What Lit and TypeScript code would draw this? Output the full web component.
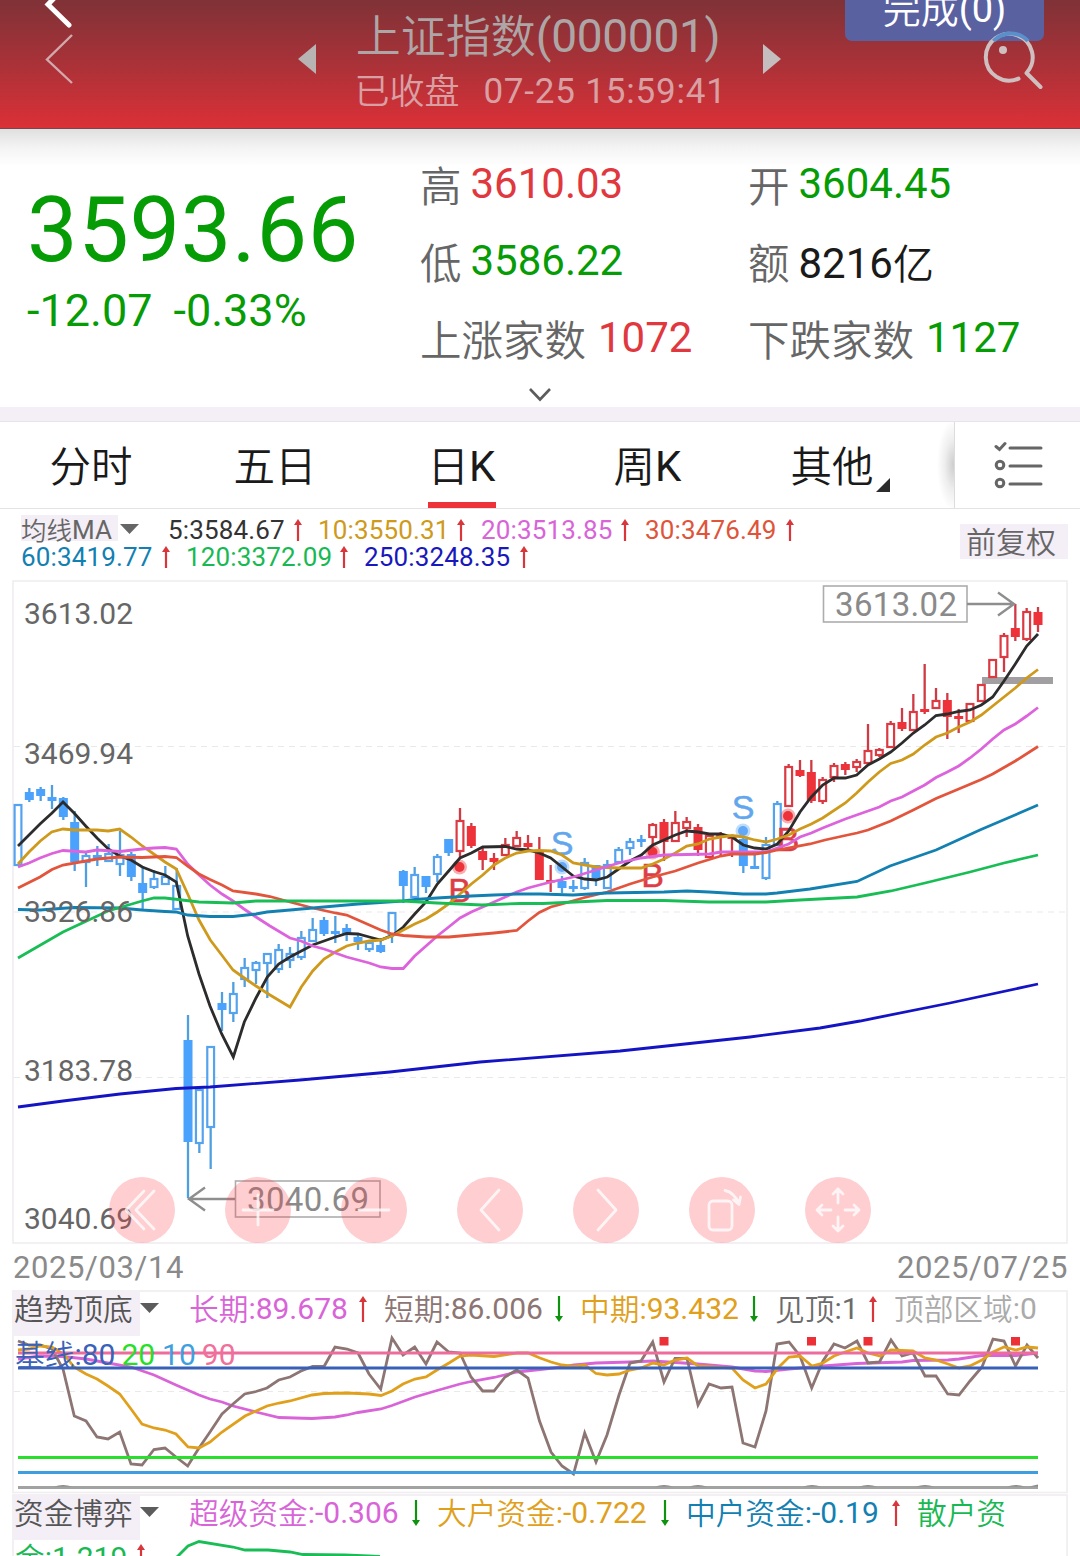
import { LitElement, html, svg, css } from "lit";
import { customElement, property } from "lit/decorators.js";

/** Splits a label so that Chinese runs can take a lighter face than digits. */
const mixed = (text: string) =>
  text
    .split(/([\u4e00-\u9fff]+)/)
    .filter((s) => s !== "")
    .map((s) => (/[\u4e00-\u9fff]/.test(s) ? html`<span class="cn">${s}</span>` : s));

const cnStyle = css`
  .cn {
    font-family: "Noto Sans CJK SC", sans-serif;
    font-weight: 350;
    line-height: 0;
    letter-spacing: 0;
    vertical-align: -0.03em;
  }
`;

const RED = "#ee3239";
const BLUE = "#4aa2fc";

/** Candles: [filled, high, body top, body bottom, low] in chart units. */
type Candle = [number, number, number, number, number];
const candles: Candle[] = [
  [0, 804, 804, 866, 866], [1, 788, 792, 800, 802], [1, 787, 789, 796, 801], [1, 785, 797, 801, 809],
  [1, 797, 798, 817, 820], [1, 811, 822, 862, 871], [0, 853, 855, 863, 887], [1, 846, 855, 858, 866],
  [0, 844, 853, 862, 862], [0, 831, 854, 865, 876], [1, 852, 854, 877, 881], [1, 867, 883, 893, 910],
  [0, 870, 878, 888, 889], [0, 866, 876, 885, 885], [0, 868, 885, 910, 910], [1, 1015, 1040, 1142, 1198],
  [0, 1089, 1089, 1144, 1153], [0, 1046, 1046, 1128, 1169], [1, 992, 1003, 1010, 1031], [0, 982, 993, 1014, 1022],
  [0, 958, 967, 980, 987], [0, 961, 962, 971, 984], [0, 953, 953, 964, 998], [0, 944, 949, 970, 973],
  [0, 947, 953, 961, 968], [0, 931, 937, 958, 960], [0, 918, 929, 942, 942], [1, 917, 920, 934, 936],
  [1, 916, 931, 934, 943], [1, 924, 928, 934, 941], [1, 933, 937, 942, 950], [0, 941, 942, 950, 952],
  [1, 938, 945, 952, 953], [0, 912, 912, 935, 943], [1, 870, 871, 886, 903], [0, 867, 874, 898, 898],
  [1, 876, 876, 887, 893], [0, 854, 856, 875, 882], [1, 839, 839, 853, 856], [0, 808, 820, 852, 858],
  [1, 823, 826, 846, 848], [1, 848, 851, 860, 870], [1, 853, 858, 862, 870], [0, 838, 844, 856, 856],
  [0, 831, 837, 847, 847], [1, 835, 843, 847, 849], [1, 837, 851, 880, 880], [1, 865, 880, 882, 892],
  [1, 876, 881, 888, 893], [1, 880, 886, 889, 892], [0, 858, 862, 889, 890], [1, 865, 865, 880, 886],
  [0, 860, 864, 889, 889], [0, 847, 849, 863, 863], [0, 838, 841, 849, 855], [1, 835, 839, 842, 847],
  [0, 823, 824, 838, 847], [1, 819, 822, 842, 861], [0, 811, 822, 842, 842], [0, 817, 821, 829, 837],
  [1, 824, 827, 850, 856], [0, 835, 835, 858, 858], [1, 832, 835, 838, 857], [1, 835, 836, 839, 857],
  [1, 837, 839, 866, 873], [1, 855, 866, 869, 869], [0, 837, 844, 879, 880], [0, 801, 803, 846, 846],
  [0, 764, 766, 807, 807], [1, 760, 770, 776, 777], [1, 760, 772, 801, 803], [0, 777, 779, 802, 804],
  [0, 763, 765, 778, 782], [1, 762, 764, 770, 775], [0, 759, 761, 768, 772], [0, 724, 750, 764, 764],
  [0, 748, 749, 756, 757], [0, 721, 723, 748, 748], [1, 708, 722, 729, 731], [0, 694, 711, 731, 731],
  [1, 664, 709, 712, 714], [0, 688, 700, 709, 709], [1, 693, 700, 717, 739], [1, 709, 716, 719, 733],
  [0, 703, 703, 722, 722], [0, 684, 684, 702, 702], [0, 659, 659, 678, 678], [0, 633, 635, 658, 672],
  [1, 604, 628, 637, 641], [0, 608, 611, 640, 641], [1, 607, 612, 625, 632],
];

/** The trend colour of a candle by its index. */
const isBlue = (i: number) => i < 39 || (i >= 48 && i <= 55) || (i >= 64 && i <= 67);

const STEP = 1020 / 90;

const averages: { color: string; width: number; pts: string }[] = [
  { color: "#1414c4", width: 2.8, pts: "18,1107 63,1101 120,1094 176,1088.5 210,1087 300,1080 390,1072 480,1062 620,1051 750,1037 820,1028 860,1021 950,1003 1038,984" },
  { color: "#2c2c2c", width: 2.8, pts: "18,846 29,835 40,824 52,813 63,802 74.3,813.3 85.7,826 97,838 108.3,849 119.7,856 131,860 142.3,867 153.7,871.5 165,875 176.3,882 182,909 187.7,936 199,974 210,1006 221.7,1034 233.3,1057 244.3,1022 256,998 267.3,977 278.7,964 290,957 301.3,951 312.7,945 324,941 335.3,937 346.7,933.5 358,934 369.3,937 380.7,940 393,935 403.3,927 414.7,914 426,902 437.3,884 448.7,871 460,858 471.3,853 482.7,847 505.3,846.5 516.7,849 528,850 539.3,853 550.7,858 562,867 573.3,876 584.7,879 596,880 607.3,877 618.7,869 630,861 641.3,855 652.7,845 664,840 675.3,835 686.7,831 698,832 709.3,834 720.7,834 732,837 743.3,845 754.7,848 766,849 777.3,844 788.7,831 800,812 811.3,797 822.7,785 834,778 845.3,778 856.7,775 868,765 879.3,759 890.7,752 902,743 913.3,733 924.7,725 936,715.5 947.3,714 958.7,711.5 970,710 981.3,705 992.7,697 1004,681 1015.3,664 1026.7,646 1038,634" },
  { color: "#cf9a1c", width: 2.8, pts: "18,864 29,852 40.3,841 51.7,832 63,829 74,830 97,830 108.3,831 119.7,829 131,837 142.3,846 153.7,854 165,862 176.3,869 187.7,894 199,920 210.3,940 221.7,955 233,970 244.3,978 256,986 270,995 290,1007 301.3,987 312.7,971 324,959 335.3,952 346.7,946 358,943 369.3,941 380.7,940 392,936 403.3,930 414.7,924 426,919 437.3,912 448.7,904 460,894 471.3,884 482.7,875 494,865 505.3,858 516.7,853 528,851 539,850.5 550.7,851 562,855 573.3,863 596,867 618.7,868 641.3,868 652.7,864 664,859 675.3,853 686.7,846 698,844 709.3,839 720.7,837 732,835.5 743.3,837 754.7,840 766,842 777.3,839 788.7,835 800,829 811.3,824 822.7,818 845.3,803 856.7,793 868,782 879.3,772 890.7,763.5 902,760 913.3,754 924.7,745 936,737 947.3,733 958.7,727 970,722 981.3,715 992.7,706 1004,697 1015.3,688 1026.7,678 1038,669.5" },
  { color: "#dd63dc", width: 2.8, pts: "18,867 29,863 40,858 52,853.5 63,850.5 85.7,852 97,850 120,851.5 142,849 153.7,848 165,847.5 176.3,849 187.7,864 199,875 210,885 222,894 233,901 244,909 256,917 270,926 290,938 301,941 312.7,946 324,949 346.7,957 369.3,963 380.7,967 392,968.5 403.3,968.5 414.7,956 426,946 437.3,936 448.7,927 460,918 471.3,912 482.7,907 494,902 505.3,897 516.7,892 528,888 550.7,882 573.3,877 596,870 618.7,863 641.3,858 664,855 709.3,854 720.7,852 766,852 777.3,848 788.7,844 800,837 811.3,833 822.7,828 845.3,819 868,811 879.3,807 890.7,801 902,797 913.3,791 924.7,785 936,777.5 947.3,772 958.7,766 970,758 981.3,749 992.7,739 1004,730 1015.3,724 1026.7,716 1038,707.5" },
  { color: "#e2553c", width: 2.8, pts: "18,888 40,877 52,869.5 63,865 85.7,861 97,859 120,857 142,857.5 165,856.5 176.3,857.5 187.7,866 199,874 210,879.5 222,885 233,891 256,894 270,896.5 290,902 312.7,908 335.3,913 346.7,915 358,920 380.7,930 392,934 403.3,935.5 426,937 448.7,937 471.3,935 494,933 516.7,930.5 528,921 539.3,912.5 550.7,907 562,904 584.7,897.5 607.3,892 630,884 652.7,877 675.3,871 698,863 720.7,856 732,854 754.7,854 766,852.5 777.3,850 810,844 825,840 845.3,835.5 857,833 868,830 890.7,821 913.3,810 936,798.5 958.7,789 981.3,779.5 992.7,774 1004,767.5 1015.3,761 1038,746.5" },
  { color: "#1380b2", width: 2.8, pts: "18,909.5 40,910 74,907.5 120,908 142,910 165,911.5 176,912 187.7,915 210,916.5 233,916.5 256,914 267,912 290,910 312.7,908 335,906 358,904 403,901 415,899.5 437,898 471,896 494,895 517,894 540,894 573,895 607,893 664,892 687,891 709,892 743,894 766,894 777,893 810,889 857,881.5 890,866 936,850 947,845 981,829.5 1015,815 1038,805" },
  { color: "#18bd55", width: 2.8, pts: "18,958 63,932 108,911 142,901 154,898 165,898 199,902 233,903 256,901 340,901 403,901 437,903 482,905 520,903.5 543,903.5 607,900.5 664,900.5 709,902 766,902 800,900 857,897 891,891 925,883 970,872 1004,863 1038,855" },
];

const trendShort = "18,1341 29,1345 40,1345 52,1349 63,1369 74.3,1416 86,1421 97,1437 108,1439 119.7,1432 131,1464 142,1465 154,1449.5 165,1448 176,1457 187.7,1466 199,1448 210,1432 222,1414 233,1404 244.7,1394 256,1391.5 267,1388 278.7,1380 290,1377 301,1371 312.7,1366.5 324,1366.5 335,1347 347,1349 358,1353 369,1374 380.7,1389 392,1338 403,1355 414.7,1347 426,1364 437,1342 448.7,1352 460,1353 471,1377 482.7,1391 494,1391 505,1377 516.7,1370 528,1378 539.5,1421 551,1452 562,1466 573.5,1474 584.7,1433 596,1462 607,1435 619,1395 630,1363 641,1361 652.7,1342 664,1382 675,1358.5 687,1358.5 698,1405 709,1384 721,1388 732,1387 743,1443 755,1447 766,1411 777,1344 789,1342 800,1356 811.7,1388 823,1361 834,1344 845,1348 857,1341 868,1363 879.5,1362 891,1340 902,1356 913,1353 925,1376 936,1376 947.7,1394 959,1395 970,1381 982,1367 993,1339 1004,1341 1015.5,1366 1027,1345 1038,1358";
const trendMid = "18,1350 29,1349 40,1346 52,1347 63.7,1354 74,1367 86,1374 97,1379 108,1386 119.7,1394 131,1409 142,1424 154,1428 165,1430 176,1434 188,1447 199,1448 210,1442 222,1432 245,1416 256,1411 267,1406 279,1403 290,1401 312,1395 324,1393.5 347,1393 369,1394 381,1395.5 392,1391 403,1384 415,1379 426,1377 437,1370 449,1363 460,1356 471,1355 494,1356.5 517,1353 528,1353 540,1358 551,1362 562,1365 574,1366.5 585,1365 596,1373.5 607,1375 619,1374 630,1370 641,1368 653,1363 664,1365 675,1360 687,1358 698,1366 732,1368 743,1380 755,1388 766,1384 778,1368 789,1357 800,1356 812,1366 823,1363 834,1356 845,1352 857,1348 868,1353 880,1356 891,1350 913,1351 925,1358 936,1360 948,1364 959,1368 970,1366 982,1360 993,1352 1004,1347 1016,1350 1027,1347 1038,1348";
const trendLong = "18,1359 40,1356 63,1356.5 86,1359 97,1361 108,1363 131,1367 154,1375 176,1385 199,1395 210,1399 222,1402 233,1406 256,1412 279,1417.5 312,1418.5 335,1417 347,1415 358,1412.5 381,1409 392,1405.5 415,1397 437,1390.5 460,1384 471,1381.5 494,1377.5 517,1372 540,1369.5 562,1367 574,1365 596,1363 630,1362 653,1361 698,1364 732,1367 755,1371 766,1371.5 789,1369 823,1366 857,1363.5 902,1362 913,1360.5 948,1360 959,1359 982,1355.5 1016,1355.5 1038,1353";

/** Small vertical arrow that shows an indicator's direction. */
@customElement("trend-arrow")
class TrendArrow extends LitElement {
  @property() dir = "up";
  @property({ type: Number }) size = 26;
  static styles = css`
    :host { display: block; width: 10px; flex: none; }
    .mark { display: block; width: 10px; }
    .up { color: #d9363c; }
    .down { color: #0f930f; transform: rotate(180deg); }
  `;
  render() {
    const s = this.size;
    return html`<svg class="mark ${this.dir}" height=${s} viewBox="0 0 10 ${s}">
      <path d="M5 3V${s}" stroke="currentColor" stroke-width="2.2" />
      <path d="M5 0L9 6H1Z" fill="currentColor" />
    </svg>`;
  }
}

@customElement("quote-header")
class QuoteHeader extends LitElement {
  static styles = [
    cnStyle,
    css`
      :host { display: block; }
      .bar {
        position: relative;
        box-sizing: border-box;
        height: 129px;
        border-bottom: 1px solid #7d4452;
        background: linear-gradient(#7f3237, #a93238 50%, #dc3037);
        display: grid;
        grid-template-columns: 298px 18px 1fr 18px 299px;
        overflow: hidden;
      }
      .back { padding: 33px 0 0 45px; }
      .step { padding-top: 44px; }
      svg { display: block; }
      .center { text-align: center; padding: 11px 3px 0 0; white-space: nowrap; }
      .title { font-size: 46px; line-height: 50px; color: #aea6a6; letter-spacing: -0.3px; }
      .title .cn { font-size: 45px; }
      .sub { margin: 9px -5px 0 0; font-size: 35px; line-height: 44px; color: #d9a0a4; display: flex; justify-content: center; gap: 24px; letter-spacing: 0.8px; }
      .done {
        position: absolute;
        left: 845px;
        top: -40px;
        width: 199px;
        height: 81px;
        box-sizing: border-box;
        padding-top: 24px;
        border-radius: 7px;
        background: #5a61a0;
        color: #fff;
        text-align: center;
        font-size: 38px;
        line-height: 50px;
      }
      .search { position: relative; display: flex; justify-content: flex-end; padding: 28px 35px 0 0; }
      .ghost { position: absolute; left: 42px; top: 0; }
    `,
  ];
  render() {
    return html`<header class="bar">
      <div class="back">
        <svg width="30" height="54" viewBox="45 33 30 54"><path d="M72 35L47 59.5L72 83" fill="none" stroke="#d3a9ac" stroke-width="2.4" /></svg>
      </div>
      <div class="step"><svg width="18" height="30"><path d="M0 15L18 0V30Z" fill="#b8b4b4" /></svg></div>
      <div class="center">
        <div class="title">${mixed("上证指数(000001)")}</div>
        <div class="sub"><span>${mixed("已收盘")}</span><span>07-25 15:59:41</span></div>
      </div>
      <div class="step"><svg width="18" height="30"><path d="M18 15L0 0V30Z" fill="#c4bebe" /></svg></div>
      <div class="done">${mixed("完成(0)")}</div>
      <div class="search">
        <svg width="64" height="64" viewBox="980 28 64 64" fill="none" stroke="#d0bfc1" stroke-width="4" stroke-linecap="round">
          <path d="M1017.500 78.700A23.400 23.400 0 1 1 1025.500 73L1039.500 87" stroke-linejoin="round" />
          <path d="M992.500 41A23.400 23.400 0 0 1 1026.900 41" stroke="#5b8fcc" stroke-linecap="butt" />
          <circle cx="1002" cy="50" r="4" fill="#d0bfc1" stroke="none" />
        </svg>
      </div>
      <svg class="ghost" width="34" height="32" viewBox="42 0 34 32"><path d="M58 -6L48 4.500L69 25" fill="none" stroke="#fff" stroke-width="5" stroke-linecap="round" /></svg>
    </header>`;
  }
}

const quotes = [
  ["高", "3610.03", "up"], ["开", "3604.45", "down"],
  ["低", "3586.22", "down"], ["额", "8216亿", "flat"],
  ["上涨家数", "1072", "up wide"], ["下跌家数", "1127", "down wide"],
];

@customElement("quote-summary")
class QuoteSummary extends LitElement {
  static styles = [
    cnStyle,
    css`
      :host { display: block; }
      .box { height: 278px; background: linear-gradient(#dfdfdf, #f3f3f3 18px, #fff 37px); display: flex; }
      .left { width: 420px; box-sizing: border-box; padding: 57px 0 0 27px; color: #069c06; }
      .price { font-size: 90px; line-height: 90px; letter-spacing: 0.700px; }
      .delta { margin-top: 9.500px; font-size: 45px; line-height: 50px; display: flex; gap: 21px; }
      .grid { display: grid; grid-template-columns: 328px 1fr; padding-top: 16px; flex: 1; grid-auto-rows: 77px; }
      .cell { display: flex; gap: 9px; font-size: 42px; line-height: 77px; white-space: nowrap; }
      .label { font-size: 41.500px; color: #666; padding-top: 2.500px; }
      .up { color: #e0383e; }
      .down { color: #069c06; }
      .wide { padding-left: 3px; }
      .flat { color: #1a1a1a; padding-top: 3px; }
      .flat .cn { font-size: 41px; }
      .more { display: flex; justify-content: center; margin-top: -21px; height: 21px; }
    `,
  ];
  render() {
    return html`<section>
      <div class="box">
        <div class="left">
          <div class="price">3593.66</div>
          <div class="delta"><span>-12.07</span><span>-0.33%</span></div>
        </div>
        <div class="grid">
          ${quotes.map(([l, v, c]) => html`<div class="cell"><span class="label">${mixed(l)}</span><span class=${c}>${mixed(v)}</span></div>`)}
        </div>
      </div>
      <div class="more">
        <svg width="24" height="16" viewBox="0 0 24 16"><path d="M2 3L12 13.500L22 3" fill="none" stroke="#5c5c5c" stroke-width="2.600" /></svg>
      </div>
    </section>`;
  }
}

@customElement("period-tabs")
class PeriodTabs extends LitElement {
  static styles = [
    cnStyle,
    css`
      :host { display: block; }
      .band { height: 14px; background: #f4eef6; border-bottom: 1px solid #e6e4e6; }
      .bar { display: flex; height: 86px; border-bottom: 1px solid #e4e2e4; background: #fff; }
      .tabs { width: 924px; display: grid; grid-template-columns: 182px 186px 187px 185px 184px; }
      .tab { display: flex; flex-direction: column; align-items: center; font-size: 42px; line-height: 80px; padding-top: 5px; height: 81px; color: #1a1a1a; }
      .tab span.text { height: 75px; }
      .tab .cn { font-size: 41.500px; }
      .on::after { content: ""; width: 68px; height: 6px; background: #ee3239; }
      .last { flex-direction: row; justify-content: center; align-items: flex-start; margin-left: 16px; gap: 2px; }
      .corner { margin-top: 51px; width: 14px; height: 14px; flex: none; }
      .fade { width: 30px; background: radial-gradient(ellipse 17px 46px at 100% 50%, #cccccc, #eeeeee 55%, #fff); border-right: 1px solid #dcdcdc; }
      .list { padding: 18px 0 0 38px; }
    `,
  ];
  render() {
    return html`<nav>
      <div class="band"></div>
      <div class="bar">
        <div class="tabs">
          ${["分时", "五日", "日K", "周K"].map((t, i) => html`<div class="tab ${i === 2 ? "on" : ""}"><span class="text">${mixed(t)}</span></div>`)}
          <div class="tab last">
            <span class="text">${mixed("其他")}</span>
            <svg class="corner" viewBox="0 0 14 14"><path d="M14 0V14H0Z" fill="#2c2c2c" /></svg>
          </div>
        </div>
        <div class="fade"></div>
        <div class="list">
          <svg width="52" height="52" viewBox="993 440 52 52" fill="none" stroke="#666" stroke-width="3" stroke-linecap="round">
            <path d="M996 446.500L999.500 449.500L1005 443.500M1010 448H1041M1010 466H1041M1010 484H1041" />
            <circle cx="1000" cy="465" r="3.800" /><circle cx="1000" cy="483" r="3.800" />
          </svg>
        </div>
      </div>
    </nav>`;
  }
}

@customElement("ma-legend")
class MaLegend extends LitElement {
  static styles = [
    cnStyle,
    css`
      :host { display: block; }
      .box { height: 71px; display: flex; justify-content: space-between; padding: 0 12px 0 21px; font-size: 26px; }
      .rows { padding-top: 8px; }
      .row { display: grid; height: 26.500px; line-height: 26.500px; white-space: nowrap; letter-spacing: 0.150px; }
      .r1 { grid-template-columns: 97px 50px 150px 163px 164px 165px; }
      .r2 { grid-template-columns: 165px 178px 180px; }
      .name { background: #f4eef6; color: #666; height: 26px; margin-top: -2px; padding-top: 2px; box-sizing: border-box; }
      .name .cn { font-size: 25.500px; }
      .tri { padding: 7px 0 0 2px; }
      .tri svg { display: block; }
      .item { display: flex; justify-content: space-between; padding-right: 15px; }
      trend-arrow { margin-top: 2px; }
      .badge { align-self: flex-start; margin-top: 15px; width: 108px; height: 35px; line-height: 36px; background: #f4eef6; color: #666; font-size: 30px; padding-left: 6px; box-sizing: border-box; }
      .c5 { color: #333; }
      .c10 { color: #cf9a1c; }
      .c20 { color: #d864d8; }
      .c30 { color: #e0543a; }
      .c60 { color: #1380b2; }
      .c120 { color: #18b953; }
      .c250 { color: #1818bc; }
    `,
  ];
  render() {
    const item = (n: string, v: string) => html`<div class="item c${n}"><span>${n}:${v}</span><trend-arrow .size=${22}></trend-arrow></div>`;
    return html`<div class="box">
      <div class="rows">
        <div class="row r1">
          <div class="name">${mixed("均线MA")}</div>
          <div class="tri"><svg width="19" height="10"><path d="M0 0H19L9.500 10Z" fill="#666" /></svg></div>
          ${item("5", "3584.67")}${item("10", "3550.31")}${item("20", "3513.85")}${item("30", "3476.49")}
        </div>
        <div class="row r2">${item("60", "3419.77")}${item("120", "3372.09")}${item("250", "3248.35")}</div>
      </div>
      <div class="badge">${mixed("前复权")}</div>
    </div>`;
  }
}

const buttonIcons = [
  svg`<path d="M2 -19L-16 0L2 19M12 -19L-6 0L12 19" />`,
  svg`<path d="M-15 0H15M0 -15V15" />`,
  svg`<path d="M-15 0H15" />`,
  svg`<path d="M9 -20L-9 0L9 20" />`,
  svg`<path d="M-8 -20L10 0L-8 20" />`,
  svg`<rect x="-13" y="-9" width="23" height="29" rx="4" /><path d="M3 -19.500Q12 -18 17 -6M11.500 -10L17 -5.500L18.500 -13" />`,
  svg`<path d="M0 -7V-21M-5 -16L0 -21L5 -16M0 7V21M-5 16L0 21L5 16M-7 0H-21M-16 -5L-21 0L-16 5M7 0H21M16 -5L21 0L16 5" />`,
];

@customElement("kline-chart")
class KlineChart extends LitElement {
  static styles = css`
    :host { display: block; }
    .wrap { position: relative; }
    .plot { display: block; }
    text { font-family: Roboto, sans-serif; }
    .axis { font-size: 30px; fill: #666; }
    .tag { font-size: 33px; fill: #8a8a8a; }
    .mark { font-size: 34px; font-family: "Liberation Sans", sans-serif; text-anchor: middle; }
    .tools { position: absolute; left: 109px; top: 597px; display: flex; gap: 50px; }
    .tool { display: block; }
    .dates { display: flex; justify-content: space-between; padding: 0 12px 0 13px; height: 46px; line-height: 47px; font-size: 31px; letter-spacing: 0.600px; color: #8a8a8a; }
  `;
  private candle(c: Candle, i: number) {
    const x = 18 + i * STEP;
    const color = isBlue(i) ? BLUE : RED;
    const wick = isBlue(i) ? "#4f9fe0" : "#cf3a44";
    const [filled, hi, top, bottom, lo] = c;
    const h = Math.max(bottom - top, 2.5);
    return svg`
      <path d="M${x} ${hi}V${top}M${x} ${bottom}V${lo}" stroke=${wick} stroke-width="2.3" />
      ${filled
        ? svg`<rect x=${x - 4.5} y=${top} width="9" height=${h} fill=${color} />`
        : svg`<rect x=${x - 3.4} y=${top + 1} width="6.800" height=${Math.max(h - 2, 2)} fill="#fff" stroke=${isBlue(i) ? "#55a3ee" : "#dc3a42"} stroke-width="2.2" />`}`;
  }
  private signal(letter: string, x: number, base: number, dotY: number) {
    const c = letter === "B" ? "#dd3d46" : "#62a6ee";
    const d = letter === "B" ? RED : "#62a8f8";
    return svg`<circle cx=${x} cy=${dotY} r="7.500" fill=${d} opacity="0.4" /><circle cx=${x} cy=${dotY} r="5" fill=${d} />
      <text class="mark" x=${x} y=${base} fill=${c} stroke=${c} stroke-width="0.500">${letter}</text>`;
  }
  render() {
    return html`<div class="wrap">
        <svg class="plot" width="1080" height="664" viewBox="0 580 1080 664">
          <rect x="13" y="581" width="1054" height="662" fill="#fff" stroke="#f1edf0" stroke-width="1.600" />
          ${[746.5, 912, 1077.5].map((y) => svg`<path d="M14 ${y}H1067" stroke="#e9e9e9" stroke-width="1.200" stroke-dasharray="6 5" />`)}
          <rect x="982" y="677" width="71" height="7" fill="#a29fa3" />
          ${candles.map((c, i) => this.candle(c, i))}
          ${this.signal("B", 459.5, 902, 867)}${this.signal("B", 652.5, 887, 852)}${this.signal("B", 788, 851, 816)}
          ${this.signal("S", 562, 855, 867)}${this.signal("S", 743, 819, 831)}
          ${averages.map((a) => svg`<polyline points=${a.pts} fill="none" stroke=${a.color} stroke-width=${a.width} />`)}
          ${[["3613.02", 624], ["3469.94", 764], ["3326.86", 922], ["3183.78", 1081], ["3040.69", 1229]].map(
            ([t, y]) => svg`<text class="axis" x="24" y=${y} textLength="109">${t}</text>`
          )}
          <g fill="none" stroke="#8e8e8e" stroke-width="2.400">
            <rect x="823.500" y="586" width="143.500" height="36" stroke="#adadad" stroke-width="1.600" />
            <path d="M967 604H1013M998 592.500L1014 604L998 615.500" />
            <rect x="235.500" y="1181" width="144.500" height="36" stroke="#adadad" stroke-width="1.600" />
            <path d="M235 1199H190M205 1187.500L189 1199L205 1210.500" />
          </g>
          <text class="tag" x="835" y="615.500" textLength="122">3613.02</text>
          <text class="tag" x="247" y="1210.500" textLength="122">3040.69</text>
        </svg>
        <div class="tools">
          ${buttonIcons.map(
            (icon) => html`<svg class="tool" width="66" height="66" viewBox="-33 -33 66 66">
              <circle r="33" fill="#fb3c44" opacity="0.250" />
              <g fill="none" stroke="#fff" stroke-opacity="0.780" stroke-width="2.800" stroke-linecap="round" stroke-linejoin="round">${icon}</g>
            </svg>`
          )}
        </div>
      </div>
      <div class="dates"><span>2025/03/14</span><span>2025/07/25</span></div>`;
  }
}

const panelStyle = css`
  :host { display: block; font-size: 30px; }
  .panel { display: grid; }
  .plot { grid-area: 1 / 1; display: block; }
  .legend { grid-area: 1 / 1; padding-left: 14px; white-space: nowrap; z-index: 1; }
  .row { display: grid; height: 46px; line-height: 34px; }
  .name { background: #f4eef6; color: #555; height: 44px; box-sizing: border-box; }
  .cn { font-size: 29.700px; }
  .tri { padding: 11px 0 0 0; }
  .tri svg { display: block; }
  .item { display: flex; justify-content: space-between; padding-right: 16.500px; }
  trend-arrow { margin-top: 4px; }
`;
const tri = html`<div class="tri"><svg width="19" height="10"><path d="M0 0H19L9.500 10Z" fill="#5c5c5c" /></svg></div>`;

@customElement("trend-panel")
class TrendPanel extends LitElement {
  static styles = [
    cnStyle,
    panelStyle,
    css`
      .legend { padding-top: 2px; }
      .r1 { grid-template-columns: 126px 49px 195px 196px 195px 119px 160px; }
      .long { color: #d864d8; }
      .short { color: #8c7573; }
      .mid { color: #e0a01c; }
      .top { color: #6c6c6c; }
      .zone { color: #aaa; }
      .base { display: flex; gap: 6px; color: #3a62b8; padding-left: 1px; }
      .b20 { color: #28df28; }
      .b10 { color: #3fa0e0; padding-left: 1px; }
      .b90 { color: #f0709c; }
    `,
  ];
  render() {
    const level = (y: number, c: string, w = 3) => svg`<path d="M18 ${y}H1038" stroke=${c} stroke-width=${w} />`;
    const line = (pts: string, c: string) => svg`<polyline points=${pts} fill="none" stroke=${c} stroke-width="2.800" />`;
    return html`<div class="panel">
      <svg class="plot" width="1080" height="204" viewBox="0 1290 1080 204">
        <rect x="13" y="1291" width="1054" height="201.500" fill="#fff" stroke="#f1edf0" stroke-width="1.600" />
        <path d="M14 1391.500H1067" stroke="#e9e9e9" stroke-width="1.200" stroke-dasharray="6 5" />
        ${line(trendLong, "#d864d8")}${line(trendShort, "#8c7573")}${line(trendMid, "#e0a01c")}
        ${level(1457.5, "#28e02c")}${level(1472.5, "#3f9ee0")}${level(1487.5, "#a2a2a2", 3)}
        ${[63, 664, 698, 812, 868, 925, 1016].map((x) => svg`<path d="M${x - 9} 1486.500Q${x} 1483.500 ${x + 9} 1486.500Z" fill="#8a8a8a" />`)}
        <path d="M1029 1486.500L1038 1484.500V1486.500Z" fill="#8a8a8a" />
        ${level(1353, "#ee6c9c")}${level(1368, "#3860b8")}
        ${[664, 811.5, 868, 1015.5].map((x) => svg`<rect x=${x - 4.5} y="1337" width="9" height="8.500" fill="#ec3036" />`)}
      </svg>
      <div class="legend">
        <div class="row r1">
          <div class="name">${mixed("趋势顶底")}</div>
          ${tri}
          <div class="item long"><span>${mixed("长期:89.678")}</span><trend-arrow></trend-arrow></div>
          <div class="item short"><span>${mixed("短期:86.006")}</span><trend-arrow dir="down"></trend-arrow></div>
          <div class="item mid"><span>${mixed("中期:93.432")}</span><trend-arrow dir="down"></trend-arrow></div>
          <div class="item top"><span>${mixed("见顶:1")}</span><trend-arrow></trend-arrow></div>
          <div class="zone">${mixed("顶部区域:0")}</div>
        </div>
        <div class="row base"><span>${mixed("基线:80")}</span><span class="b20">20</span><span class="b10">10</span><span class="b90">90</span></div>
      </div>
    </div>`;
  }
}

@customElement("fund-panel")
class FundPanel extends LitElement {
  static styles = [
    cnStyle,
    panelStyle,
    css`
      .legend { padding-top: 2px; }
      .row { height: 44px; }
      .r1 { grid-template-columns: 126px 49px 248px 249px 231px 150px; }
      .super { color: #d864d8; }
      .big { color: #e0a01c; }
      .mid { color: #1380b2; }
      .small { color: #18b953; }
      .next { display: flex; gap: 9px; padding-left: 1px; }
    `,
  ];
  render() {
    return html`<div class="panel">
      <svg class="plot" width="1080" height="200" viewBox="0 1494 1080 200">
        <rect x="13" y="1495" width="1054" height="200" fill="#fff" stroke="#f1edf0" stroke-width="1.600" />
        <path d="M170 1562L178 1556L188 1546L199 1541.500L233 1547L245 1550L268 1550L290 1552L303 1554.500L345 1555L380 1556.500" fill="none" stroke="#18bd55" stroke-width="2.800" />
      </svg>
      <div class="legend">
        <div class="row r1">
          <div class="name">${mixed("资金博弈")}</div>
          ${tri}
          <div class="item super"><span>${mixed("超级资金:-0.306")}</span><trend-arrow dir="down"></trend-arrow></div>
          <div class="item big"><span>${mixed("大户资金:-0.722")}</span><trend-arrow dir="down"></trend-arrow></div>
          <div class="item mid"><span>${mixed("中户资金:-0.19")}</span><trend-arrow></trend-arrow></div>
          <div class="small">${mixed("散户资")}</div>
        </div>
        <div class="next small"><span>${mixed("金:1.219")}</span><trend-arrow></trend-arrow></div>
      </div>
    </div>`;
  }
}

@customElement("app-root")
class AppRoot extends LitElement {
  static styles = css`
    :host { display: block; }
    .page { width: 1080px; height: 1556px; overflow: hidden; background: #fff; font-family: Roboto, "Noto Sans CJK SC", sans-serif; }
  `;
  render() {
    return html`<main class="page">
      <quote-header></quote-header>
      <quote-summary></quote-summary>
      <period-tabs></period-tabs>
      <ma-legend></ma-legend>
      <kline-chart></kline-chart>
      <trend-panel></trend-panel>
      <fund-panel></fund-panel>
    </main>`;
  }
}
